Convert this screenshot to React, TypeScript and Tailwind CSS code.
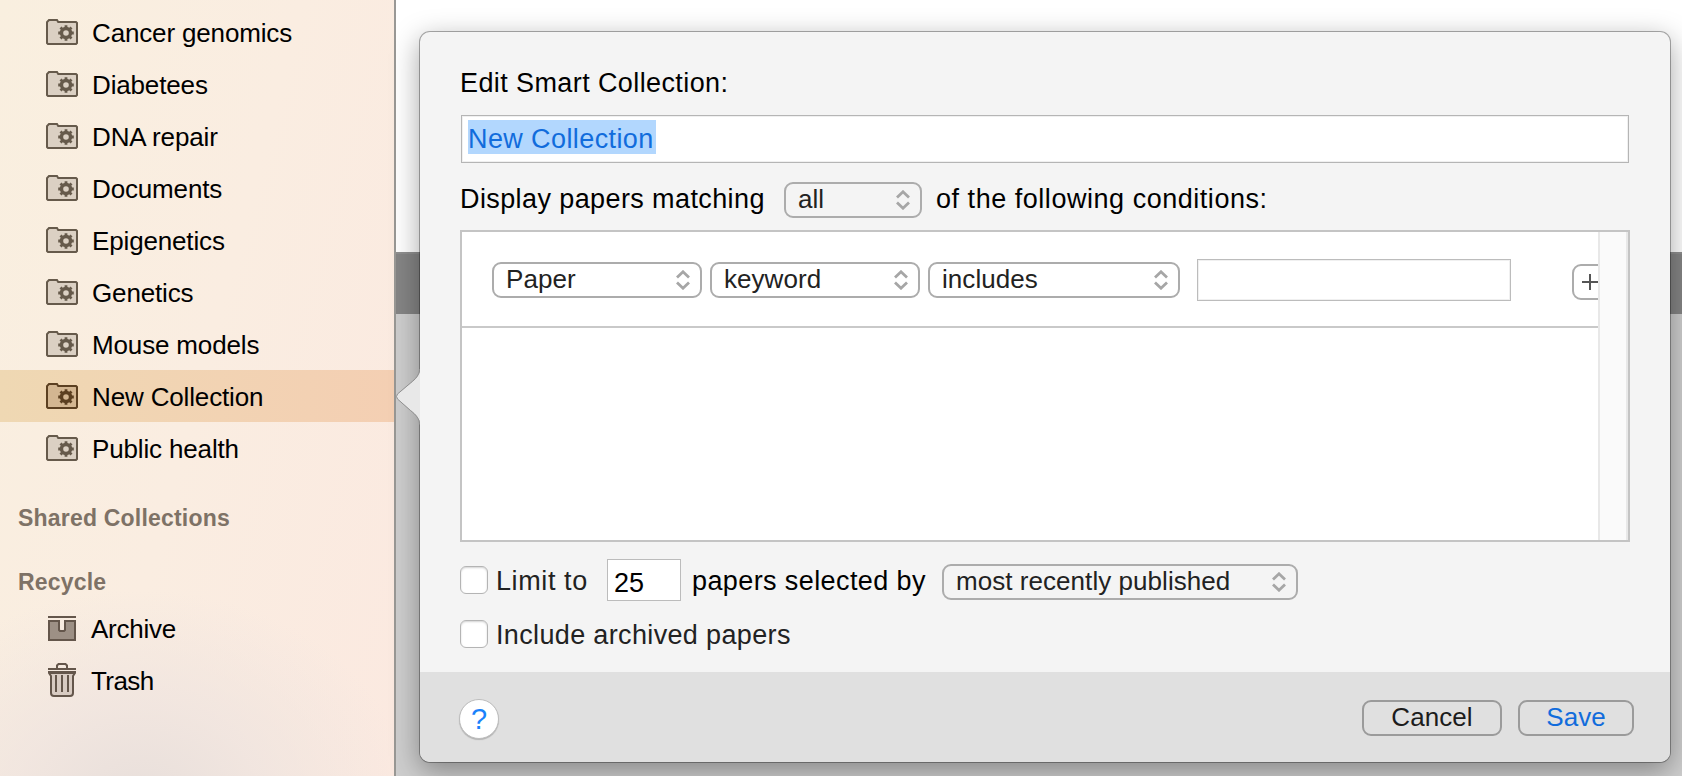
const folders = [
  "Cancer genomics",
  "Diabetees",
  "DNA repair",
  "Documents",
  "Epigenetics",
  "Genetics",
  "Mouse models",
  "New Collection",
  "Public health",
];

function FolderIcon({ active }: { active: boolean }) {
  const stroke = active ? "#5c4021" : "#665a4b";
  return (
    <svg width="32" height="26" viewBox="0 0 32 26" fill="none">
      <path
        d="M1 24V3.2L3 1h8l1.200 2H30l1 1v20l-1 1H2z"
        fill={active ? "#d3b691" : "#dbd0c3"}
        stroke={stroke}
        strokeWidth="2"
      />
      <circle cx="20" cy="14" r="4.500" stroke={stroke} strokeWidth="3.400" />
      <g stroke={stroke} strokeWidth="2.800">
        <path d="M20 6.200v3M20 18.800v3M12.200 14h3M24.800 14h3" />
        <path d="M14.500 8.500l2 2M23.500 17.500l2 2M14.500 19.500l2-2M23.500 10.500l2-2" />
      </g>
    </svg>
  );
}

function ArchiveIcon() {
  return (
    <svg width="28" height="26" viewBox="0 0 28 26" fill="none">
      <path d="M0 1h28" stroke="#64564b" strokeWidth="2" />
      <path
        d="M1 5h10v9l1 1h4l1-1V5h10v19H1z"
        fill="#9d9085"
        stroke="#64564b"
        strokeWidth="2"
      />
    </svg>
  );
}

function TrashIcon() {
  return (
    <svg
      className="mb-0.5"
      width="28"
      height="34"
      viewBox="0 0 28 34"
      fill="none"
      stroke="#64564b"
      strokeWidth="2"
    >
      <path d="M9 6V2.500L10.500 1h7L19 2.500V6" />
      <path d="M0 6h28M0 9h28" />
      <path d="M1 10l2 3v17q0 3 3 3h16q3 0 3-3V13l2-3z" fill="#d8cbc2" />
      <path d="M8 12v17M14 12v17M20 12v17" />
    </svg>
  );
}

function Select({ label, className }: { label: string; className: string }) {
  return (
    <button
      className={`flex h-9 shrink-0 items-center justify-between rounded-[9px] border-2 border-[#acacac] pl-3 pr-2.5 text-[26px] leading-none tracking-[0.05px] whitespace-nowrap text-[#222] ${className}`}
    >
      <span className="pb-0.5">{label}</span>
      <svg width="14" height="20" viewBox="0 0 14 20" fill="none" stroke="#a6a6a6" strokeWidth="2.800">
        <path d="M1 7.500L7 1.800l6 5.700M1 12.500l6 5.700 6-5.700" />
      </svg>
    </button>
  );
}

function Checkbox() {
  return (
    <span className="size-7 shrink-0 rounded-md border border-[#b4b4b4] bg-white shadow-[inset_0_1px_2px_rgba(0,0,0,0.18)]" />
  );
}

function Sidebar() {
  return (
    <aside className="h-full w-[396px] shrink-0 border-r-2 border-[#999895] bg-[radial-gradient(ellipse_270px_210px_at_140px_800px,#e8dfdb,#efe4dfcc_45%,#f5e8e200),linear-gradient(105deg,#f9efdf_0%,#faede1_50%,#fbe9e0_100%)] pt-1.5 text-[26px] text-black">
      <ul>
        {folders.map((name) => (
          <li
            key={name}
            className={`flex h-[52px] items-center gap-3.5 pl-[46px] ${
              name === "New Collection" ? "bg-linear-to-r from-[#efd8b3] to-[#f4cfb3]" : ""
            }`}
          >
            <FolderIcon active={name === "New Collection"} />
            <span className="pt-[3px] tracking-[-0.15px]">{name}</span>
          </li>
        ))}
      </ul>
      <h2 className="mt-7 pl-[18px] text-[23px] leading-8 font-bold tracking-[0.2px] text-[#7e7266]">
        Shared Collections
      </h2>
      <h2 className="mt-8 pl-[18px] text-[23px] leading-8 font-bold tracking-[0.2px] text-[#7e7266]">
        Recycle
      </h2>
      <ul className="mt-[5px]">
        <li className="flex h-[52px] items-center gap-[15px] pl-12">
          <ArchiveIcon />
          <span className="tracking-[-0.25px]">Archive</span>
        </li>
        <li className="flex h-[52px] items-center gap-[15px] pl-12">
          <TrashIcon />
          <span className="tracking-[-0.6px]">Trash</span>
        </li>
      </ul>
    </aside>
  );
}

function Popover() {
  return (
    <div className="absolute top-[31px] left-[419px] flex h-[732px] w-[1252px] flex-col rounded-[11px] border border-[#00000050] bg-[#f4f4f4] bg-clip-padding text-[27px] tracking-[0.4px] text-black shadow-[0_8px_28px_rgba(0,0,0,0.35)]">
      <svg className="absolute top-[334px] -left-6 h-[62px] w-6" viewBox="0 0 24 62" fill="none">
        <path
          d="M24 0v3c0 6-4 10-9 14L1.500 28Q-.5 30.500 1.500 33L15 44.500c5 4 9 8 9 14V62z"
          fill="#e8e8e8"
        />
        <path
          d="M23.500 3c0 6-4 10-9 14L1.500 28Q-.5 30.500 1.500 33L14.500 44.500c5 4 9 8 9 14"
          stroke="#8f8f8f"
        />
      </svg>

      <div className="flex-1 pt-9 pr-[40px] pl-10">
        <h1 className="leading-[30px]">Edit Smart Collection:</h1>
        <div className="mt-[17px] ml-px flex h-12 w-[1168px] items-start border border-[#b5b5b5] bg-white pt-1 pl-1.5 shadow-[inset_0_0_0_1px_#f0f0f0]">
          <span className="h-[34px] w-[188px] bg-[#b2d7fe] leading-[38px] text-[#116cdc]">
            New Collection
          </span>
        </div>
        <div className="mt-[19px] flex h-9 items-center">
          <span className="w-[324px] pb-0.5">Display papers matching</span>
          <Select label="all" className="w-[138px]" />
          <span className="ml-[14px] pb-0.5 tracking-[0.53px]">of the following conditions:</span>
        </div>

        <div className="mt-3 flex h-[312px] w-[1170px] border-2 border-[#c4c4c4] bg-white">
          <div className="min-w-0 flex-1 overflow-hidden">
            <div className="flex h-24 items-center border-b-2 border-[#c9c9c9] pt-0.5 pl-[30px]">
              <Select label="Paper" className="w-[210px]" />
              <Select label="keyword" className="ml-2 w-[210px]" />
              <Select label="includes" className="ml-2 w-[252px]" />
              <input
                aria-label="Value"
                className="ml-[17px] h-[42px] w-[314px] shrink-0 border border-[#bcbcbc] bg-white shadow-[inset_0_0_0_1px_#f0f0f0]"
              />
              <button
                aria-label="Add condition"
                className="mt-1 ml-[61px] flex h-9 w-12 shrink-0 items-center rounded-[9px] border-2 border-[#acacac] pl-2"
              >
                <svg width="16" height="16" viewBox="0 0 16 16" stroke="#555" strokeWidth="2">
                  <path d="M8 0v16M0 8h16" />
                </svg>
              </button>
            </div>
          </div>
          <div className="w-[30px] shrink-0 border-x-2 border-[#e8e8e8] bg-[#fafafa]" />
        </div>

        <div className="mt-[17px] flex h-[42px] items-center">
          <Checkbox />
          <span className="mt-0.5 ml-2 w-[111px] tracking-[0.6px] text-[#222]">Limit to</span>
          <span className="flex h-[42px] w-[74px] items-center border border-[#bcbcbc] bg-white pt-1.5 pl-1.5 tracking-normal">
            25
          </span>
          <span className="mt-0.5 ml-[11px] w-[249px] shrink-0 whitespace-nowrap">
            papers selected by
          </span>
          <Select label="most recently published" className="mt-[3px] ml-px w-[356px]" />
        </div>
        <div className="mt-3 flex h-[42px] items-center">
          <Checkbox />
          <span className="mt-0.5 ml-2 tracking-[0.35px] text-[#222]">Include archived papers</span>
        </div>
      </div>

      <footer className="flex h-[90px] items-center rounded-b-[10px] bg-[#e0e0e0] pt-0.5 pr-9 pl-[39px] text-[26px] tracking-[0.07px]">
        <button className="mt-0.5 flex size-10 items-center justify-center rounded-full border border-[#bdbdbd] bg-white pt-0.5 text-[29px] text-[#1a82fb] shadow-[0_1px_1px_rgba(0,0,0,0.2)]">
          ?
        </button>
        <button className="ml-auto h-9 w-[140px] rounded-[9px] border-2 border-[#9b9b9b] pb-0.5 leading-none text-[#1c1c1c]">
          Cancel
        </button>
        <button className="ml-4 h-9 w-[116px] rounded-[9px] border-2 border-[#9b9b9b] pb-0.5 leading-none text-[#116cdc]">
          Save
        </button>
      </footer>
    </div>
  );
}

export default function App() {
  return (
    <div className="relative flex h-[776px] w-[1682px] overflow-hidden font-['Liberation_Sans',Arial,sans-serif]">
      <Sidebar />
      <main className="flex flex-1 flex-col">
        <div className="h-[252px] bg-white" />
        <div className="h-[62px] border-t-2 border-[#8f8f8f] bg-[#858585]" />
        <div className="flex-1 bg-[#cecece]" />
      </main>
      <Popover />
    </div>
  );
}
